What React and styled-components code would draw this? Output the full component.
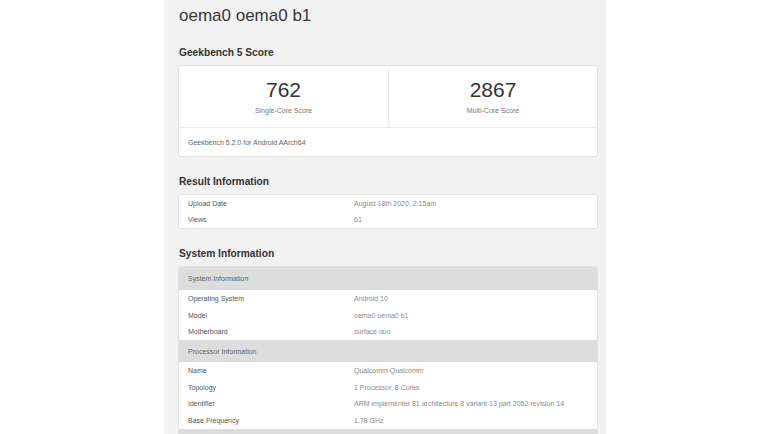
import React from 'react';
import styled, { createGlobalStyle } from 'styled-components';

const GlobalStyle = createGlobalStyle`
  html, body {
    margin: 0;
    padding: 0;
    background: #ffffff;
    overflow: hidden;
  }
  body {
    font-family: "Liberation Sans", Arial, sans-serif;
  }
`;

const Page = styled.div`
  width: 100%;
  height: 434px;
  display: flex;
  justify-content: center;
`;

const Panel = styled.div`
  width: 442px;
  box-sizing: border-box;
  padding: 4px 9px 0 15px;
  background-color: #f2f2f2;
`;

const Title = styled.h1`
  margin: 0;
  font-size: 17px;
  line-height: 23px;
  font-weight: 400;
  color: #383838;
`;

const SectionTitle = styled.h2`
  margin: 18px 0 6px;
  font-size: 10.2px;
  line-height: 15px;
  font-weight: 700;
  color: #333;
`;

const Card = styled.div`
  background: #ffffff;
  box-shadow: 0 0 0 1px #e3e3e3, 0 1px 2px rgba(0, 0, 0, 0.06);
  border-radius: 2px;
  overflow: hidden;
`;

const ScoreGrid = styled.div`
  display: grid;
  grid-template-columns: 1fr 1fr;
  height: 62px;
  border-bottom: 1px solid #ececec;
  box-sizing: border-box;
`;

const ScoreCell = styled.div`
  display: flex;
  flex-direction: column;
  align-items: center;
  padding-top: 12px;
  border-left: ${p => (p.$divider ? '1px solid #ececec' : 'none')};
`;

const ScoreValue = styled.div`
  font-size: 21px;
  line-height: 24px;
  color: #333;
`;

const ScoreLabel = styled.div`
  margin-top: 4px;
  font-size: 7px;
  line-height: 10px;
  color: #777;
`;

const CardFooter = styled.div`
  height: 28px;
  display: flex;
  align-items: center;
  padding: 0 9px;
  font-size: 7px;
  color: #666;
`;

const Row = styled.div`
  display: grid;
  grid-template-columns: 166px 1fr;
  align-items: center;
  height: ${p => (p.$header ? p.$h || 23 : 16.67)}px;
  box-sizing: border-box;
  padding: 0 9px;
  font-size: 7px;
  background: ${p => (p.$header ? '#dddddd' : '#ffffff')};
  & + & {
    border-top: ${p => (p.$header ? 'none' : '1px solid #ececec')};
  }
`;

const Label = styled.span`
  color: ${p => (p.$header ? '#666' : '#555')};
  white-space: nowrap;
`;

const Value = styled.span`
  color: #8a8a8a;
  white-space: nowrap;
`;

const scores = [
  { value: '762', label: 'Single-Core Score' },
  { value: '2867', label: 'Multi-Core Score' },
];

const resultInfo = [
  ['Upload Date', 'August 18th 2020, 2:15am'],
  ['Views', '61'],
];

const systemInfo = [
  { header: 'System Information', h: 23 },
  ['Operating System', 'Android 10'],
  ['Model', 'oema0 oema0 b1'],
  ['Motherboard', 'surface duo'],
  { header: 'Processor Information', h: 22 },
  ['Name', 'Qualcomm Qualcomm'],
  ['Topology', '1 Processor, 8 Cores'],
  ['Identifier', 'ARM implementer 81 architecture 8 variant 13 part 2052 revision 14'],
  ['Base Frequency', '1.78 GHz'],
  { header: ' ', h: 22 },
];

const App = () => {
  return (
    <>
      <GlobalStyle />
      <Page>
        <Panel>
          <Title>oema0 oema0 b1</Title>

          <SectionTitle>Geekbench 5 Score</SectionTitle>
          <Card>
            <ScoreGrid>
              {scores.map((s, i) => (
                <ScoreCell key={s.label} $divider={i > 0}>
                  <ScoreValue>{s.value}</ScoreValue>
                  <ScoreLabel>{s.label}</ScoreLabel>
                </ScoreCell>
              ))}
            </ScoreGrid>
            <CardFooter>Geekbench 5.2.0 for Android AArch64</CardFooter>
          </Card>

          <SectionTitle>Result Information</SectionTitle>
          <Card>
            {resultInfo.map(([k, v]) => (
              <Row key={k}>
                <Label>{k}</Label>
                <Value>{v}</Value>
              </Row>
            ))}
          </Card>

          <SectionTitle>System Information</SectionTitle>
          <Card>
            {systemInfo.map((item, i) =>
              item.header ? (
                <Row key={'h' + i} $header $h={item.h}>
                  <Label $header>{item.header.trim()}</Label>
                </Row>
              ) : (
                <Row key={item[0]}>
                  <Label>{item[0]}</Label>
                  <Value>{item[1]}</Value>
                </Row>
              )
            )}
          </Card>
        </Panel>
      </Page>
    </>
  );
};

export default App;
